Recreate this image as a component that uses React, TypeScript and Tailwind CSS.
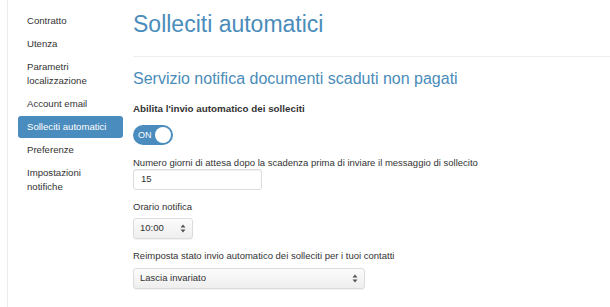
const navItems = [
  { label: ["Contratto"] },
  { label: ["Utenza"] },
  { label: ["Parametri", "localizzazione"] },
  { label: ["Account email"] },
  { label: ["Solleciti automatici"], active: true },
  { label: ["Preferenze"] },
  { label: ["Impostazioni", "notifiche"] },
];

function Chevrons() {
  return (
    <svg width="6" height="9" viewBox="0 0 6 9" className="text-[#555]">
      <path d="M3 0.5 L5.5 3.5 H0.5 Z" fill="currentColor" />
      <path d="M3 8.5 L5.5 5.5 H0.5 Z" fill="currentColor" />
    </svg>
  );
}

export default function App() {
  return (
    <div
      className="flex h-[307px] w-[610px] overflow-hidden bg-white text-[#333]"
      style={{ fontFamily: '"Liberation Sans", Arial, sans-serif' }}
    >
      {/* Sidebar */}
      <div className="ml-[7px] w-[116px] shrink-0 border-l border-[#ececec] pt-[10px] pl-[10px]">
        <ul className="flex flex-col gap-[1px]">
          {navItems.map((item) => (
            <li
              key={item.label.join(" ")}
              className={
                item.active
                  ? "rounded-[3px] bg-[#4a8cbd] px-[9px] py-[4px] text-[9.6px] leading-[14px] text-white"
                  : "px-[9px] py-[4px] text-[9.6px] leading-[14px] text-[#333]"
              }
            >
              {item.label.map((l) => (
                <div key={l}>{l}</div>
              ))}
            </li>
          ))}
        </ul>
      </div>

      {/* Main */}
      <div className="ml-[10px] flex-1">
        <h1 className="mt-[11px] text-[23px] leading-[26px] text-[#4a8cba]">
          Solleciti automatici
        </h1>
        <div className="mt-[19px] border-t border-[#eeeeee]" />

        <h2 className="mt-[12px] text-[16px] leading-[20px] text-[#4a8cba]">
          Servizio notifica documenti scaduti non pagati
        </h2>

        <div className="mt-[13px] text-[9.8px] font-bold leading-[14px]">
          Abilita l'invio automatico dei solleciti
        </div>

        {/* Toggle */}
        <div className="mt-[9px] flex h-[20px] w-[40px] items-center rounded-full bg-[#4a8cbd] pl-[5px] pr-[2px]">
          <span className="text-[9px] leading-none text-white">ON</span>
          <span className="ml-auto h-[16px] w-[16px] rounded-full bg-white" />
        </div>

        <div className="mt-[12px] text-[9.5px] leading-[12px]">
          Numero giorni di attesa dopo la scadenza prima di inviare il messaggio di sollecito
        </div>
        <div className="flex h-[21px] w-[129px] items-center rounded-[3px] border border-[#ddd] px-[7px] text-[9.5px] shadow-[inset_0_1px_1px_rgba(0,0,0,0.06)]">
          15
        </div>

        <div className="mt-[11px] text-[9.5px] leading-[12px]">Orario notifica</div>
        <div className="mt-[5px] flex h-[21px] w-[60px] items-center justify-between rounded-[3px] border border-[#dcdcdc] bg-gradient-to-b from-[#fcfcfc] to-[#eeeeee] px-[6px] text-[9.5px] shadow-[0_1px_1px_rgba(0,0,0,0.06)]">
          <span>10:00</span>
          <Chevrons />
        </div>

        <div className="mt-[11px] text-[9.5px] leading-[12px]">
          Reimposta stato invio automatico dei solleciti per i tuoi contatti
        </div>
        <div className="mt-[6px] flex h-[21px] w-[232px] items-center justify-between rounded-[3px] border border-[#dcdcdc] bg-gradient-to-b from-[#fcfcfc] to-[#eeeeee] px-[6px] text-[9.5px] shadow-[0_1px_1px_rgba(0,0,0,0.06)]">
          <span>Lascia invariato</span>
          <Chevrons />
        </div>
      </div>
    </div>
  );
}
